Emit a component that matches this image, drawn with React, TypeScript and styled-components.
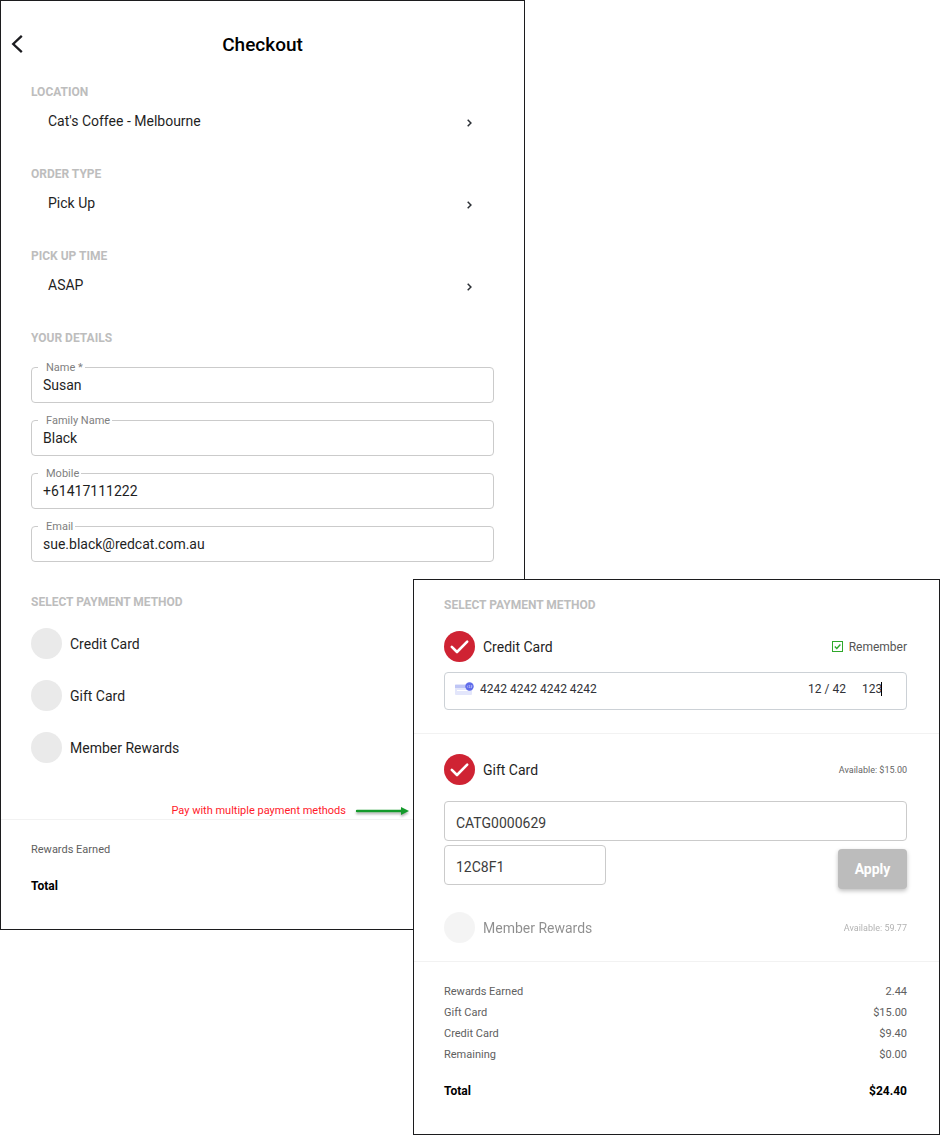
import React from 'react';
import styled, { createGlobalStyle } from 'styled-components';

const GlobalStyle = createGlobalStyle`
  *, *::before, *::after { box-sizing: border-box; }
  body {
    margin: 0;
    background: #fff;
    color: #1f1f1f;
    font-family: Roboto, "Liberation Sans", sans-serif;
    font-size: 14px;
    line-height: 20px;
  }
  input, button { font: inherit; color: inherit; }
`;

const Page = styled.main`
  display: grid;
  grid-template-columns: 413fr 112fr 415fr;
  align-items: start;
`;

const Panel = styled.section`
  border: 1px solid #1c1c1e;
  background: #fff;
  min-width: 0;
`;

const CheckoutPanel = styled(Panel)`
  grid-area: 1 / 1 / 2 / 3;
  padding-bottom: 32px;
`;

const PaymentPanel = styled(Panel)`
  grid-area: 1 / 2 / 2 / 4;
  margin-top: 579px;
  padding: 17px 0 32px;
  z-index: 2;
`;

const PaymentBlock = styled.div`
  padding: 0 32px 0 30px;
`;

const CheckoutBlock = styled.div`
  padding: 0 30px;
`;

const Header = styled.header`
  display: grid;
  grid-template-columns: 32px 1fr 32px;
  align-items: center;
  padding-top: 32px;
  margin-bottom: 27px;
`;

const Title = styled.h1`
  margin: 0;
  font-size: 19px;
  line-height: 24px;
  font-weight: 500;
  color: #000;
  text-align: center;
`;

const IconButton = styled.button`
  display: flex;
  padding: 0 0 0 10px;
  border: 0;
  background: none;
  cursor: pointer;
`;

const Heading = styled.h2`
  margin: 0;
  font-size: 12px;
  line-height: 16px;
  font-weight: 700;
  color: #bdbdbd;
  text-transform: uppercase;
`;

const Choice = styled.button`
  display: flex;
  align-items: center;
  justify-content: space-between;
  width: 100%;
  margin: 11px 0 35px;
  padding: 0 22px 0 17px;
  border: 0;
  background: none;
  text-align: left;
  line-height: 20px;
  cursor: pointer;
`;

const ChoiceIcon = styled.svg`
  margin-top: 4px;
`;

const FieldList = styled.div`
  display: grid;
  gap: 17px;
  margin: 21px 0 32px;
`;

const Field = styled.div`
  position: relative;
`;

const FieldLabel = styled.label`
  position: absolute;
  top: -7px;
  left: 7px;
  padding: 0 2px 0 8px;
  background: #fff;
  color: #808080;
  font-size: 11px;
  line-height: 16px;
`;

const TextInput = styled.input`
  display: block;
  width: 100%;
  height: 36px;
  padding: 0 11px;
  border: 1px solid #cbcbcb;
  border-radius: 4px;
  background: transparent;
`;

const CodeInput = styled(TextInput)<{ $short?: boolean }>`
  width: ${(p) => (p.$short ? '162px' : '100%')};
  height: 40px;
  padding-top: 4px;
  color: #3c3c3c;
`;

const MethodList = styled.div`
  display: grid;
  gap: 21px;
  margin: 18px 0 56px;
`;

const MethodRow = styled.div<{ $dim?: boolean; $gap?: string }>`
  display: flex;
  align-items: center;
  justify-content: space-between;
  margin: ${(p) => p.$gap ?? '0'};
  opacity: ${(p) => (p.$dim ? 0.5 : 1)};
`;

const MethodLabel = styled.label`
  display: flex;
  align-items: center;
  gap: 8px;
`;

const Tick = styled.span`
  position: relative;
  display: block;
  width: 31px;
  height: 31px;
`;

const TickInput = styled.input`
  appearance: none;
  display: block;
  width: 31px;
  height: 31px;
  margin: 0;
  border-radius: 50%;
  background: #eaeaea;
  &:checked { background: #cf2333; }
`;

const TickMark = styled.svg`
  position: absolute;
  inset: 0;
  pointer-events: none;
`;

const Available = styled.span`
  font-size: 9px;
  line-height: 16px;
  color: #666;
`;

const Remember = styled.label`
  display: flex;
  align-items: center;
  gap: 6px;
  font-size: 12px;
  line-height: 16px;
  color: #555;
`;

const RememberTick = styled.span`
  position: relative;
  display: block;
  width: 11px;
  height: 11px;
`;

const RememberInput = styled.input`
  appearance: none;
  display: block;
  width: 11px;
  height: 11px;
  margin: 0;
  border: 1px solid #2fa82b;
`;

const Divider = styled.hr`
  height: 1px;
  margin: 0;
  border: 0;
  background: #f2f2f2;
`;

const SummaryDivider = styled(Divider)`
  margin-top: 18px;
`;

const CardBox = styled.div`
  display: flex;
  align-items: center;
  height: 38px;
  margin: 10px 0 23px;
  padding: 0 24px 4px 10px;
  border: 1px solid #ccd1d6;
  border-radius: 4px;
  font-size: 12px;
  color: #303238;
`;

const CardInput = styled.input<{ $width?: string }>`
  flex: ${(p) => (p.$width ? 'none' : '1')};
  width: ${(p) => p.$width ?? 'auto'};
  min-width: 0;
  padding: 0;
  border: 0;
  outline: 0;
  background: none;
`;

const CardIcon = styled.svg`
  flex: none;
  margin-right: 5px;
`;

const Caret = styled.span`
  width: 1px;
  height: 14px;
  background: #000;
`;

const PinRow = styled.div`
  display: flex;
  align-items: flex-start;
  justify-content: space-between;
  margin: 4px 0 23px;
`;

const ApplyButton = styled.button`
  width: 69px;
  height: 40px;
  margin-top: 4px;
  padding: 0;
  border: 0;
  border-radius: 4px;
  background: #bcbcbc;
  box-shadow: 0 2px 4px rgba(0, 0, 0, 0.25);
  color: #fff;
  font-weight: 700;
`;

const Summary = styled.dl`
  margin: 19px 0 0;
`;

const SummaryRow = styled.div<{ $total?: boolean }>`
  display: flex;
  justify-content: space-between;
  margin-top: ${(p) => (p.$total ? '16px' : '0')};
  font-size: ${(p) => (p.$total ? '12px' : '11px')};
  line-height: 21px;
  font-weight: ${(p) => (p.$total ? 700 : 400)};
  color: ${(p) => (p.$total ? '#000' : '#606060')};
`;

const Amount = styled.dd`
  margin: 0;
`;

const Note = styled.p`
  grid-area: 1 / 1 / 2 / 2;
  justify-self: end;
  display: flex;
  align-items: center;
  gap: 10px;
  margin: 803px 3px 0 0;
  font-size: 11px;
  line-height: 16px;
  color: #ff1a2a;
  z-index: 1;
`;

const NoteArrow = styled.svg`
  overflow: visible;
  filter: drop-shadow(0 2px 1px rgba(0, 0, 0, 0.3));
`;

function Method({ label, checked, children, dim, gap }: {
  label: string;
  checked?: boolean;
  dim?: boolean;
  gap?: string;
  children?: React.ReactNode;
}) {
  return (
    <MethodRow $dim={dim} $gap={gap}>
      <MethodLabel>
        <Tick>
          <TickInput type="checkbox" defaultChecked={checked} disabled={dim} />
          {checked && (
            <TickMark width="31" height="31" viewBox="0 0 31 31" aria-hidden="true">
              <path d="M7.8 15.8 13 21 23.2 10.6" fill="none" stroke="#fff" strokeWidth="2.6" strokeLinecap="round" strokeLinejoin="round" />
            </TickMark>
          )}
        </Tick>
        {label}
      </MethodLabel>
      {children}
    </MethodRow>
  );
}

const choices = [
  ['Location', "Cat's Coffee - Melbourne"],
  ['Order type', 'Pick Up'],
  ['Pick up time', 'ASAP'],
];

const fields = [
  ['name', 'Name *', 'Susan', 'text'],
  ['family', 'Family Name', 'Black', 'text'],
  ['mobile', 'Mobile', '+61417111222', 'tel'],
  ['email', 'Email', 'sue.black@redcat.com.au', 'email'],
];

const amounts = [
  ['Rewards Earned', '2.44'],
  ['Gift Card', '$15.00'],
  ['Credit Card', '$9.40'],
  ['Remaining', '$0.00'],
];

export default function App() {
  return (
    <>
      <GlobalStyle />
      <Page>
        <CheckoutPanel>
          <Header>
            <IconButton type="button" aria-label="Back">
              <svg width="12" height="20" viewBox="0 0 12 20" aria-hidden="true">
                <path d="M10.8 0.8 2.2 9 10.8 17.2" fill="none" stroke="#1c1c20" strokeWidth="2.3" />
              </svg>
            </IconButton>
            <Title>Checkout</Title>
          </Header>
          <CheckoutBlock>
            {choices.map(([heading, value]) => (
              <div key={heading}>
                <Heading>{heading}</Heading>
                <Choice type="button">
                  {value}
                  <ChoiceIcon width="5" height="8" viewBox="0 0 5 8" aria-hidden="true">
                    <path d="M0.7 0.8 3.9 4 0.7 7.2" fill="none" stroke="#2c3036" strokeWidth="1.5" />
                  </ChoiceIcon>
                </Choice>
              </div>
            ))}
            <Heading>Your details</Heading>
            <FieldList>
              {fields.map(([id, label, value, type]) => (
                <Field key={id}>
                  <TextInput id={id} type={type} defaultValue={value} />
                  <FieldLabel htmlFor={id}>{label}</FieldLabel>
                </Field>
              ))}
            </FieldList>
            <Heading>Select payment method</Heading>
            <MethodList>
              <Method label="Credit Card" />
              <Method label="Gift Card" />
              <Method label="Member Rewards" />
            </MethodList>
          </CheckoutBlock>
          <Divider />
          <CheckoutBlock>
            <Summary>
              <SummaryRow><dt>Rewards Earned</dt></SummaryRow>
              <SummaryRow $total><dt>Total</dt></SummaryRow>
            </Summary>
          </CheckoutBlock>
        </CheckoutPanel>

        <Note>
          Pay with multiple payment methods
          <NoteArrow width="54" height="8" viewBox="0 0 54 8" aria-hidden="true">
            <path d="M1 4H46" stroke="#149a2b" strokeWidth="2.4" strokeLinecap="round" />
            <path d="M45 0 53 4 45 8Z" fill="#149a2b" />
          </NoteArrow>
        </Note>

        <PaymentPanel>
          <PaymentBlock>
            <Heading>Select payment method</Heading>
            <Method label="Credit Card" checked gap="18px 0 0">
              <Remember>
                <RememberTick>
                  <RememberInput type="checkbox" defaultChecked />
                  <TickMark width="11" height="11" viewBox="0 0 11 11" aria-hidden="true">
                    <path d="M2.8 5.4 4.8 7.4 8.4 3.6" fill="none" stroke="#2fa82b" strokeWidth="1.4" />
                  </TickMark>
                </RememberTick>
                Remember
              </Remember>
            </Method>
            <CardBox>
              <CardIcon width="20" height="14" viewBox="0 0 20 14" aria-hidden="true">
                <rect x="0" y="2" width="17" height="11" rx="1" fill="#e3e6fb" />
                <rect x="0" y="3" width="17" height="3" fill="#bfc6f5" />
                <rect x="2" y="8" width="11" height="1" fill="#fff" />
                <circle cx="14.5" cy="4.5" r="4.2" fill="#5f6bea" />
                <path d="M12.4 3.6V5.6M13.6 3.6H15L14.4 4.6 15 5.5H13.6M16 3.6H17V4.6H16V5.6H17" fill="none" stroke="#c9cefa" strokeWidth="0.6" />
              </CardIcon>
              <CardInput aria-label="Card number" defaultValue="4242 4242 4242 4242" />
              <CardInput aria-label="Expiry date" defaultValue="12 / 42" $width="54px" />
              <CardInput aria-label="Security code" defaultValue="123" $width="19px" />
              <Caret />
            </CardBox>
          </PaymentBlock>
          <Divider />
          <PaymentBlock>
            <Method label="Gift Card" checked gap="20px 0 16px">
              <Available>Available: $15.00</Available>
            </Method>
            <CodeInput aria-label="Gift card number" defaultValue="CATG0000629" />
            <PinRow>
              <CodeInput $short aria-label="Gift card PIN" defaultValue="12C8F1" />
              <ApplyButton type="button">Apply</ApplyButton>
            </PinRow>
            <Method label="Member Rewards" dim>
              <Available>Available: 59.77</Available>
            </Method>
          </PaymentBlock>
          <SummaryDivider />
          <PaymentBlock>
            <Summary>
              {amounts.map(([name, amount]) => (
                <SummaryRow key={name}>
                  <dt>{name}</dt>
                  <Amount>{amount}</Amount>
                </SummaryRow>
              ))}
              <SummaryRow $total>
                <dt>Total</dt>
                <Amount>$24.40</Amount>
              </SummaryRow>
            </Summary>
          </PaymentBlock>
        </PaymentPanel>
      </Page>
    </>
  );
}
